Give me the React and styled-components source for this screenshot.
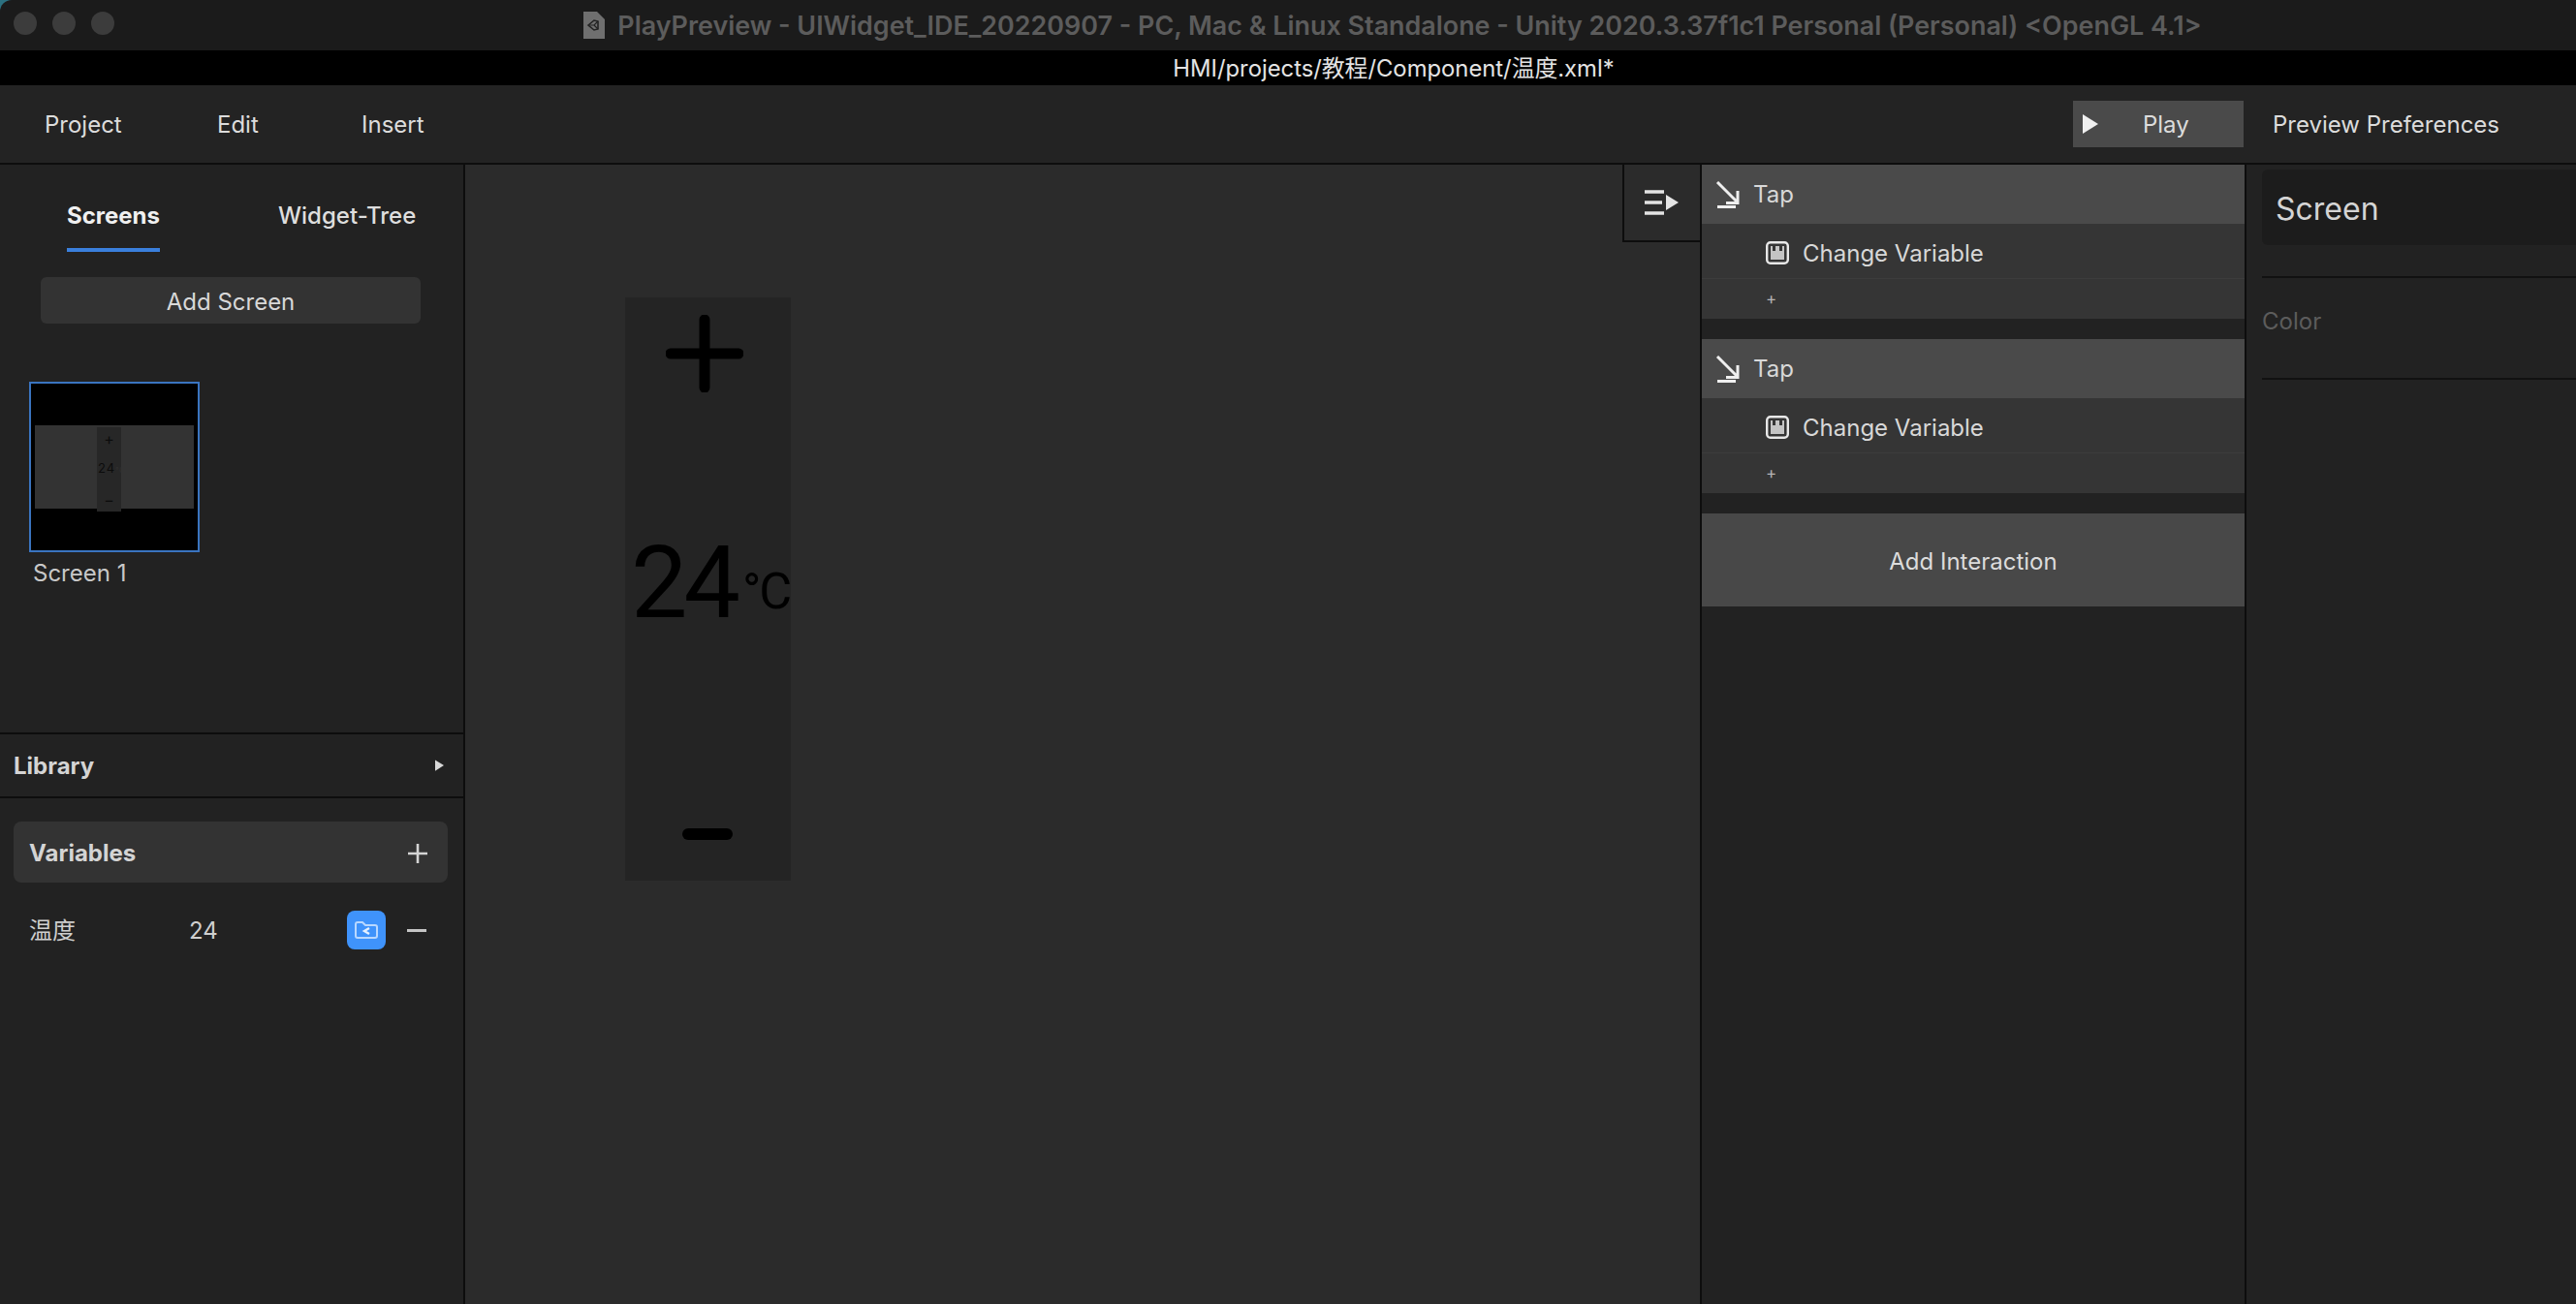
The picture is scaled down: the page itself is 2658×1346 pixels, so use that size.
import React from "react";
import styled, { createGlobalStyle } from "styled-components";

const GlobalStyle = createGlobalStyle`
  html, body {
    margin: 0;
    padding: 0;
    background: #1b1b1b;
  }
  * {
    box-sizing: border-box;
  }
`;

const Window = styled("div")`
  width: 2658px;
  height: 1346px;
  display: flex;
  flex-direction: column;
  overflow: hidden;
  background: #2c7180;
  font-family: Inter, "Noto Sans CJK SC", sans-serif;
  font-size: 24px;
  line-height: 29px;
  color: #dcdcdc;
`;

const TitleBar = styled("div")`
  position: relative;
  height: 52px;
  flex: none;
  background: #1b1b1b;
  border-top-left-radius: 12px;
  display: flex;
  align-items: center;
  justify-content: center;
`;
const Lights = styled("div")`
  position: absolute;
  left: 14px;
  top: 12px;
  display: flex;
  gap: 16px;
`;
const Light = styled("span")`
  width: 24px;
  height: 24px;
  border-radius: 50%;
  background: #3c3c3c;
`;
const WindowTitle = styled("div")`
  display: flex;
  align-items: center;
  gap: 13px;
  margin-left: 216px;
  font-weight: 600;
  font-size: 26.9px;
  color: #5c5c5c;
  white-space: nowrap;
`;

const PathBar = styled("div")`
  height: 36px;
  flex: none;
  background: #000;
  text-align: center;
  font-size: 23.8px;
  line-height: 38px;
  color: #e4e4e4;
  padding-left: 218px;
`;

const MenuBar = styled("div")`
  height: 82px;
  flex: none;
  background: #232323;
  border-bottom: 2px solid #0d0d0d;
  display: flex;
  align-items: center;
  padding-left: 46px;
  padding-right: 79px;
`;
const MenuItem = styled("div")`
  width: ${(p) => p.$w}px;
`;
const PlayButton = styled("div")`
  margin-left: auto;
  width: 176px;
  height: 48px;
  background: #4a4a4a;
  display: flex;
  align-items: center;
  padding-left: 10px;
  gap: 46px;
`;
const PrefsLabel = styled("div")`
  margin-left: 30px;
`;

const Main = styled("div")`
  flex: 1;
  display: flex;
  min-height: 0;
`;

const Sidebar = styled("div")`
  width: 480px;
  flex: none;
  background: #222;
  border-right: 2px solid #0d0d0d;
`;
const ScreensSection = styled("div")`
  height: 586px;
`;
const Tabs = styled("div")`
  display: flex;
  gap: 122px;
  padding-left: 69px;
`;
const Tab = styled("div")`
  padding-top: 38px;
  padding-bottom: 19px;
  font-weight: ${(p) => (p.$active ? 700 : 500)};
  color: ${(p) => (p.$active ? "#f0f0f0" : "#dedede")};
  border-bottom: 4px solid ${(p) => (p.$active ? "#3a7fdc" : "transparent")};
`;
const AddScreen = styled("div")`
  width: 392px;
  height: 48px;
  margin-top: 26px;
  margin-left: 42px;
  padding-top: 2px;
  border-radius: 6px;
  background: #333;
  display: flex;
  align-items: center;
  justify-content: center;
  color: #d8d8d8;
`;
const Thumb = styled("div")`
  width: 176px;
  height: 176px;
  margin-top: 60px;
  margin-left: 30px;
  border: 2px solid #3a74c0;
  background: #000;
  display: flex;
  align-items: center;
  justify-content: center;
`;
const MiniStage = styled("div")`
  position: relative;
  width: 164px;
  height: 86px;
  background: #333;
`;
const MiniWidget = styled("div")`
  position: absolute;
  left: 64px;
  top: 2px;
  width: 25px;
  height: 87px;
  background: #272727;
  display: flex;
  flex-direction: column;
  align-items: center;
  justify-content: space-between;
  padding-top: 4px;
  padding-bottom: 4px;
  color: #0c0c0c;
  font-size: 16px;
  line-height: 16px;
`;
const MiniValue = styled("div")`
  width: 100%;
  padding-left: 1px;
  white-space: nowrap;
  letter-spacing: 1px;
  font-size: 13px;
`;
const MiniUnit = styled("span")`
  font-size: 7px;
  color: #333;
`;
const ThumbLabel = styled("div")`
  margin-top: 7px;
  margin-left: 34px;
  color: #c8c8c8;
`;
const LibraryRow = styled("div")`
  height: 68px;
  border-top: 2px solid #0d0d0d;
  border-bottom: 2px solid #0d0d0d;
  display: flex;
  align-items: center;
  justify-content: space-between;
  padding-left: 14px;
  padding-right: 20px;
  font-weight: 700;
  color: #d4d4d4;
`;
const VariablesBar = styled("div")`
  height: 63px;
  margin-top: 24px;
  margin-left: 14px;
  margin-right: 16px;
  border-radius: 8px;
  background: #333;
  display: flex;
  align-items: center;
  justify-content: space-between;
  padding-top: 2px;
  padding-left: 16px;
  padding-right: 21px;
  font-weight: 700;
  color: #d4d4d4;
`;
const VariableRow = styled("div")`
  height: 40px;
  margin-top: 29px;
  display: flex;
  align-items: center;
  padding-left: 30px;
  padding-right: 38px;
  color: #cfcfcf;
`;
const VarName = styled("div")`
  width: 165px;
`;
const VarValue = styled("div")`
  flex: 1;
`;
const VarBind = styled("div")`
  width: 40px;
  height: 40px;
  border-radius: 8px;
  background: #3f93fb;
  display: flex;
  align-items: center;
  justify-content: center;
  margin-right: 22px;
`;

const Canvas = styled("div")`
  position: relative;
  width: 1274px;
  flex: none;
  background: #2b2b2b;
`;
const Widget = styled("div")`
  position: absolute;
  left: 165px;
  top: 137px;
  width: 171px;
  height: 602px;
  background: #242424;
  display: flex;
  flex-direction: column;
  align-items: center;
  color: #000;
`;
const PlusGlyph = styled("svg")`
  margin-top: 18px;
  margin-right: 7px;
  flex: none;
`;
const Reading = styled("div")`
  height: 108px;
  margin-top: 143px;
  width: 100%;
  padding-left: 6px;
  white-space: nowrap;
  font-family: Roboto, sans-serif;
  line-height: 108px;
`;
const ReadingValue = styled("span")`
  font-size: 104px;
  letter-spacing: -4px;
`;
const ReadingUnit = styled("span")`
  font-size: 52px;
  line-height: 1;
  margin-left: 6px;
  letter-spacing: -2px;
  vertical-align: 9px;
`;
const MinusGlyph = styled("svg")`
  margin-top: 199px;
  margin-right: 2px;
  flex: none;
`;
const PanelToggle = styled("div")`
  position: absolute;
  right: 0;
  top: 0;
  width: 80px;
  height: 80px;
  border-left: 2px solid #0d0d0d;
  border-bottom: 2px solid #0d0d0d;
  display: flex;
  align-items: center;
  justify-content: center;
`;

const InteractionPanel = styled("div")`
  width: 564px;
  flex: none;
  background: #222;
  border-left: 2px solid #0d0d0d;
  border-right: 2px solid #0d0d0d;
`;
const InteractionBlock = styled("div")`
  margin-bottom: 21px;
`;
const TriggerRow = styled("div")`
  height: 61px;
  background: #4a4a4a;
  display: flex;
  align-items: center;
  padding-left: 14px;
  gap: 13px;
  color: #d8d8d8;
`;
const ActionRow = styled("div")`
  height: 57px;
  background: #353535;
  border-bottom: 1px solid #3c3c3c;
  display: flex;
  align-items: center;
  padding-left: 66px;
  padding-top: 4px;
  gap: 14px;
  color: #d8d8d8;
`;
const AddActionRow = styled("div")`
  height: 41px;
  background: #353535;
  display: flex;
  align-items: center;
  padding-left: 66px;
  font-size: 17px;
  color: #b4b4b4;
`;
const AddInteraction = styled("div")`
  height: 96px;
  background: #484848;
  display: flex;
  align-items: center;
  justify-content: center;
  padding-top: 2px;
  color: #dcdcdc;
`;

const Inspector = styled("div")`
  flex: 1;
  background: #222;
  padding-top: 5px;
  padding-left: 16px;
`;
const InspectorTitle = styled("div")`
  height: 78px;
  border-radius: 6px 0 0 6px;
  background: #1c1c1c;
  display: flex;
  align-items: center;
  padding-top: 2px;
  padding-left: 14px;
  font-size: 32px;
  color: #d4d4d4;
`;
const InspectorField = styled("div")`
  height: ${(p) => p.$h}px;
  margin-top: ${(p) => p.$top}px;
  border-top: 2px solid #111;
  color: #5c5c5c;
  padding-top: 30px;
`;

const UnityDoc = () => (
  <svg width="22" height="28" viewBox="0 0 22 28">
    <path d="M0 0h14l8 8v20H0z" fill="#6f6f6f" />
    <path d="M5 14l6-5 4 1v8l-4 1z" fill="none" stroke="#222" strokeWidth="1.6" />
    <path d="M5 14h6l4-4M11 14l4 4" fill="none" stroke="#222" strokeWidth="1.2" />
  </svg>
);

const PlayTriangle = ({ w = 16, h = 20, fill = "#f0f0f0" }) => (
  <svg width={w} height={h} viewBox="0 0 16 20">
    <path d="M0 0l16 10L0 20z" fill={fill} />
  </svg>
);

const SmallPlus = ({ size = 20 }) => (
  <svg width={size} height={size} viewBox="0 0 20 20">
    <path d="M10 0v20M0 10h20" stroke="#d4d4d4" strokeWidth="2.6" />
  </svg>
);

const TapIcon = () => (
  <svg width="26" height="28" viewBox="0 0 26 28">
    <path
      d="M2 1l21 21M23 10v12.500H11M2 26.500h19"
      fill="none"
      stroke="#efefef"
      strokeWidth="3"
    />
  </svg>
);

const VariableIcon = () => (
  <svg width="24" height="24" viewBox="0 0 24 24">
    <rect x="1.2" y="1.2" width="21.6" height="21.6" rx="3.5" fill="none" stroke="#e8e8e8" strokeWidth="2.4" />
    <path d="M5 5h2v5h3V5h4v5h3V5h2v14H5z" fill="#c4c4c4" />
  </svg>
);

const Interaction = () => (
  <InteractionBlock>
    <TriggerRow>
      <TapIcon />
      Tap
    </TriggerRow>
    <ActionRow>
      <VariableIcon />
      Change Variable
    </ActionRow>
    <AddActionRow>+</AddActionRow>
  </InteractionBlock>
);

export default function App() {
  return (
    <Window>
      <GlobalStyle />
      <TitleBar>
        <Lights>
          <Light />
          <Light />
          <Light />
        </Lights>
        <WindowTitle>
          <UnityDoc />
          PlayPreview - UIWidget_IDE_20220907 - PC, Mac &amp; Linux Standalone - Unity 2020.3.37f1c1 Personal (Personal) &lt;OpenGL 4.1&gt;
        </WindowTitle>
      </TitleBar>
      <PathBar>HMI/projects/教程/Component/温度.xml*</PathBar>
      <MenuBar>
        <MenuItem $w={178}>Project</MenuItem>
        <MenuItem $w={149}>Edit</MenuItem>
        <MenuItem $w={80}>Insert</MenuItem>
        <PlayButton>
          <PlayTriangle />
          Play
        </PlayButton>
        <PrefsLabel>Preview Preferences</PrefsLabel>
      </MenuBar>
      <Main>
        <Sidebar>
          <ScreensSection>
            <Tabs>
              <Tab $active>Screens</Tab>
              <Tab>Widget-Tree</Tab>
            </Tabs>
            <AddScreen>Add Screen</AddScreen>
            <Thumb>
              <MiniStage>
                <MiniWidget>
                  +
                  <MiniValue>24<MiniUnit>°C</MiniUnit></MiniValue>
                  −
                </MiniWidget>
              </MiniStage>
            </Thumb>
            <ThumbLabel>Screen 1</ThumbLabel>
          </ScreensSection>
          <LibraryRow>
            Library
            <PlayTriangle w={9} h={14} fill="#d8d8d8" />
          </LibraryRow>
          <VariablesBar>
            Variables
            <SmallPlus />
          </VariablesBar>
          <VariableRow>
            <VarName>温度</VarName>
            <VarValue>24</VarValue>
            <VarBind>
              <svg width="24" height="18" viewBox="0 0 24 18">
                <path
                  d="M1 3a2 2 0 0 1 2-2h5l3 3h10a2 2 0 0 1 2 2v9a2 2 0 0 1-2 2H3a2 2 0 0 1-2-2z"
                  fill="none"
                  stroke="#b9d8ff"
                  strokeWidth="2"
                />
                <path d="M15 7l-5 3 5 3" fill="none" stroke="#e4f0ff" strokeWidth="2.4" />
              </svg>
            </VarBind>
            <svg width="20" height="3" viewBox="0 0 20 3">
              <rect width="20" height="3" fill="#c4c4c4" />
            </svg>
          </VariableRow>
        </Sidebar>
        <Canvas>
          <Widget>
            <PlusGlyph width="80" height="80" viewBox="0 0 80 80">
              <path d="M40 5v70M5 40h70" stroke="#000" strokeWidth="11" strokeLinecap="round" />
            </PlusGlyph>
            <Reading>
              <ReadingValue>24</ReadingValue>
              <ReadingUnit>°C</ReadingUnit>
            </Reading>
            <MinusGlyph width="52" height="12" viewBox="0 0 52 12">
              <rect width="52" height="12" rx="6" fill="#000" />
            </MinusGlyph>
          </Widget>
          <PanelToggle>
            <svg width="36" height="26" viewBox="0 0 36 26">
              <path d="M0 2h20M0 13h18M0 24h20" stroke="#e4e4e4" strokeWidth="3.6" />
              <path d="M22 5l13 8-13 8z" fill="#e4e4e4" />
            </svg>
          </PanelToggle>
        </Canvas>
        <InteractionPanel>
          <Interaction />
          <Interaction />
          <AddInteraction>Add Interaction</AddInteraction>
        </InteractionPanel>
        <Inspector>
          <InspectorTitle>Screen</InspectorTitle>
          <InspectorField $top={32} $h={105}>Color</InspectorField>
          <InspectorField $top={0} $h={2} />
        </Inspector>
      </Main>
    </Window>
  );
}
